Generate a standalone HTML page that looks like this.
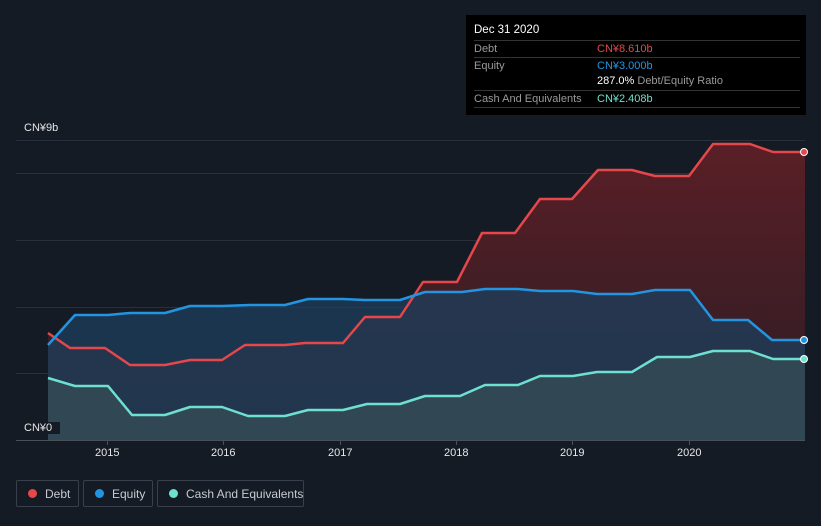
<!DOCTYPE html>
<html><head><style>
body{margin:0;width:821px;height:526px;background:#151b25;font-family:"Liberation Sans",sans-serif;overflow:hidden;position:relative}
.tt{position:absolute;left:466px;top:15px;width:340px;height:100px;background:#000;color:#fff;font-size:11px}
.tt .r{position:absolute;left:8px;right:6px;height:16px;border-top:1px solid #333;line-height:16px}
.tt .l{color:#9a9a9a;position:absolute;left:0}
.tt .v{position:absolute;left:123px}
.lg{position:absolute;top:480px;height:27px;border:1px solid #3a404b;border-radius:2px;color:#c8cad0;font-size:12px;line-height:26px;box-sizing:border-box;padding-left:28px;white-space:nowrap}
.lg i{position:absolute;left:11px;top:8px;width:9px;height:9px;border-radius:50%}
.ax{position:absolute;color:#e6e6e6;font-size:11px}
</style></head><body>
<svg width="821" height="526" style="position:absolute;left:0;top:0">
<defs>
<linearGradient id="dg" x1="0" y1="0" x2="0" y2="1"><stop offset="0" stop-color="#5a1f26"/><stop offset="1" stop-color="#2a1c24"/></linearGradient>
</defs>
<g stroke="#2a303b" stroke-width="1">
<line x1="16" y1="140.5" x2="805" y2="140.5"/><line x1="16" y1="173.5" x2="805" y2="173.5"/><line x1="16" y1="240.5" x2="805" y2="240.5"/><line x1="16" y1="307.5" x2="805" y2="307.5"/><line x1="16" y1="373.5" x2="805" y2="373.5"/>
</g>
<polygon fill="url(#dg)" points="48,333 70,348 105,348 130,365 165,365 190,360 222,360 245,345 285,345 305,343 343,343 365,317 400,317 423,282 457,282 482,233 515,233 540,199 572,199 598,170 632,170 655,176 689,176 713,144 750,144 773,152 805,152 805,440 48,440"/>
<polygon fill="#1d3f5c" fill-opacity="0.75" points="48,345 75,315 108,315 130,313 165,313 190,306 222,306 250,305 285,305 308,299 343,299 365,300 400,300 425,292 462,292 485,289 518,289 540,291 573,291 597,294 632,294 655,290 690,290 713,320 748,320 772,340 805,340 805,440 48,440"/>
<polygon fill="#344a56" fill-opacity="0.85" points="48,378 75,386 108,386 132,415 165,415 190,407 222,407 248,416 285,416 308,410 343,410 367,404 400,404 425,396 460,396 485,385 518,385 540,376 573,376 597,372 632,372 657,357 690,357 713,351 750,351 773,359 805,359 805,440 48,440"/>
<g fill="none" stroke-width="2.5" stroke-linejoin="round">
<polyline stroke="#e5474b" points="48,333 70,348 105,348 130,365 165,365 190,360 222,360 245,345 285,345 305,343 343,343 365,317 400,317 423,282 457,282 482,233 515,233 540,199 572,199 598,170 632,170 655,176 689,176 713,144 750,144 773,152 805,152"/>
<polyline stroke="#2394e0" points="48,345 75,315 108,315 130,313 165,313 190,306 222,306 250,305 285,305 308,299 343,299 365,300 400,300 425,292 462,292 485,289 518,289 540,291 573,291 597,294 632,294 655,290 690,290 713,320 748,320 772,340 805,340"/>
<polyline stroke="#6ee0cf" points="48,378 75,386 108,386 132,415 165,415 190,407 222,407 248,416 285,416 308,410 343,410 367,404 400,404 425,396 460,396 485,385 518,385 540,376 573,376 597,372 632,372 657,357 690,357 713,351 750,351 773,359 805,359"/>
</g>
<circle cx="804" cy="152" r="3.5" fill="#e5474b" stroke="#fff" stroke-width="1"/>
<circle cx="804" cy="340" r="3.5" fill="#2394e0" stroke="#fff" stroke-width="1"/>
<circle cx="804" cy="359" r="3.5" fill="#6ee0cf" stroke="#fff" stroke-width="1"/>
<line x1="16" y1="440.5" x2="805" y2="440.5" stroke="#4a505a"/>
<g stroke="#4a505a"><line x1="107.5" y1="441" x2="107.5" y2="445"/><line x1="223.5" y1="441" x2="223.5" y2="445"/><line x1="340.5" y1="441" x2="340.5" y2="445"/><line x1="456.5" y1="441" x2="456.5" y2="445"/><line x1="572.5" y1="441" x2="572.5" y2="445"/><line x1="689.5" y1="441" x2="689.5" y2="445"/></g>
</svg>
<div class="ax" style="left:24px;top:122px">CN¥9b</div>
<div class="ax" style="left:16px;top:422px;background:#151b25;padding:0 8px">CN¥0</div>
<div class="ax" style="left:95px;top:447px">2015</div>
<div class="ax" style="left:211px;top:447px">2016</div>
<div class="ax" style="left:328px;top:447px">2017</div>
<div class="ax" style="left:444px;top:447px">2018</div>
<div class="ax" style="left:560px;top:447px">2019</div>
<div class="ax" style="left:677px;top:447px">2020</div>
<div class="tt">
<div style="position:absolute;left:8px;top:9px;font-size:11.5px">Dec 31 2020</div>
<div class="r" style="top:25px"><span class="l">Debt</span><span class="v" style="color:#e5474b">CN¥8.610b</span></div>
<div class="r" style="top:42px"><span class="l">Equity</span><span class="v" style="color:#2394e0">CN¥3.000b</span></div>
<div class="r" style="top:58px;border-top:none"><span class="v">287.0% <span style="color:#9a9a9a">Debt/Equity Ratio</span></span></div>
<div class="r" style="top:75px"><span class="l">Cash And Equivalents</span><span class="v" style="color:#6ee0cf">CN¥2.408b</span></div>
<div class="r" style="top:92px;height:0"></div>
</div>
<div class="lg" style="left:16px;width:63px"><i style="background:#e5474b"></i>Debt</div>
<div class="lg" style="left:83px;width:70px"><i style="background:#2394e0"></i>Equity</div>
<div class="lg" style="left:157px;width:147px"><i style="background:#6ee0cf"></i>Cash And Equivalents</div>
</body></html>
